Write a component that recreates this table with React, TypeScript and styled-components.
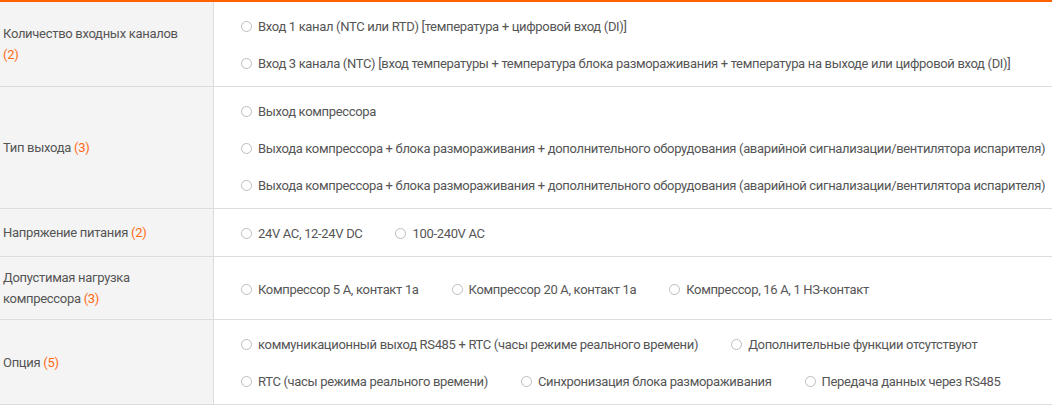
import React from "react";
import styled, { createGlobalStyle } from "styled-components";

const Global = createGlobalStyle`
  html, body { margin: 0; padding: 0; background: #fff; }
  body { font-family: Roboto, "Liberation Sans", sans-serif; }
`;

const Table = styled.div`
  width: 1052px;
  border-top: 2px solid #ff6000;
  display: flex;
  flex-direction: column;
`;

const Row = styled.div`
  display: grid;
  grid-template-columns: 214px 1fr;
  border-bottom: 1px solid #dddddd;
`;

const Label = styled.div`
  background: #f4f4f4;
  border-right: 1px solid #dddddd;
  padding: 10px 25px 10px 3px;
  display: flex;
  align-items: center;
  font-size: 13px;
  line-height: 21px;
  letter-spacing: -0.3px;
  color: #555555;
`;

const Count = styled.span`
  color: #ff6a13;
`;

const Options = styled.div`
  padding: 6px 0 4px 27px;
  display: flex;
  flex-direction: column;
  justify-content: center;
`;

const OptionLine = styled.div`
  display: flex;
  align-items: center;
  height: 37px;
`;

const Option = styled.label`
  display: inline-flex;
  align-items: center;
  gap: 6px;
  margin-right: 33px;
  font-size: 13px;
  line-height: 21px;
  letter-spacing: -0.33px;
  color: #555555;
  white-space: nowrap;
`;

const Radio = styled.span`
  width: 11px;
  height: 11px;
  box-sizing: border-box;
  border: 1px solid #bdbdbd;
  border-radius: 50%;
  background: #fff;
  flex: none;
`;

type RowData = { label: string; count: number; lines: string[][] };

const rows: RowData[] = [
  {
    label: "Количество входных каналов",
    count: 2,
    lines: [
      ["Вход 1 канал (NTC или RTD) [температура + цифровой вход (DI)]"],
      [
        "Вход 3 канала (NTC) [вход температуры + температура блока размораживания + температура на выходе или цифровой вход (DI)]",
      ],
    ],
  },
  {
    label: "Тип выхода",
    count: 3,
    lines: [
      ["Выход компрессора"],
      [
        "Выхода компрессора + блока размораживания + дополнительного оборудования (аварийной сигнализации/вентилятора испарителя)",
      ],
      [
        "Выхода компрессора + блока размораживания + дополнительного оборудования (аварийной сигнализации/вентилятора испарителя)",
      ],
    ],
  },
  {
    label: "Напряжение питания",
    count: 2,
    lines: [["24V AC, 12-24V DC", "100-240V AC"]],
  },
  {
    label: "Допустимая нагрузка компрессора",
    count: 3,
    lines: [["Компрессор 5 А, контакт 1а", "Компрессор 20 А, контакт 1а", "Компрессор, 16 А, 1 НЗ-контакт"]],
  },
  {
    label: "Опция",
    count: 5,
    lines: [
      ["коммуникационный выход RS485 + RTC (часы режиме реального времени)", "Дополнительные функции отсутствуют"],
      ["RTC (часы режима реального времени)", "Синхронизация блока размораживания", "Передача данных через RS485"],
    ],
  },
];

export default function App() {
  return (
    <>
      <Global />
      <Table>
        {rows.map((r) => (
          <Row key={r.label}>
            <Label>
              <span>
                {r.label} <Count>({r.count})</Count>
              </span>
            </Label>
            <Options>
              {r.lines.map((line, i) => (
                <OptionLine key={i}>
                  {line.map((t, j) => (
                    <Option key={j}>
                      <Radio />
                      {t}
                    </Option>
                  ))}
                </OptionLine>
              ))}
            </Options>
          </Row>
        ))}
      </Table>
    </>
  );
}
